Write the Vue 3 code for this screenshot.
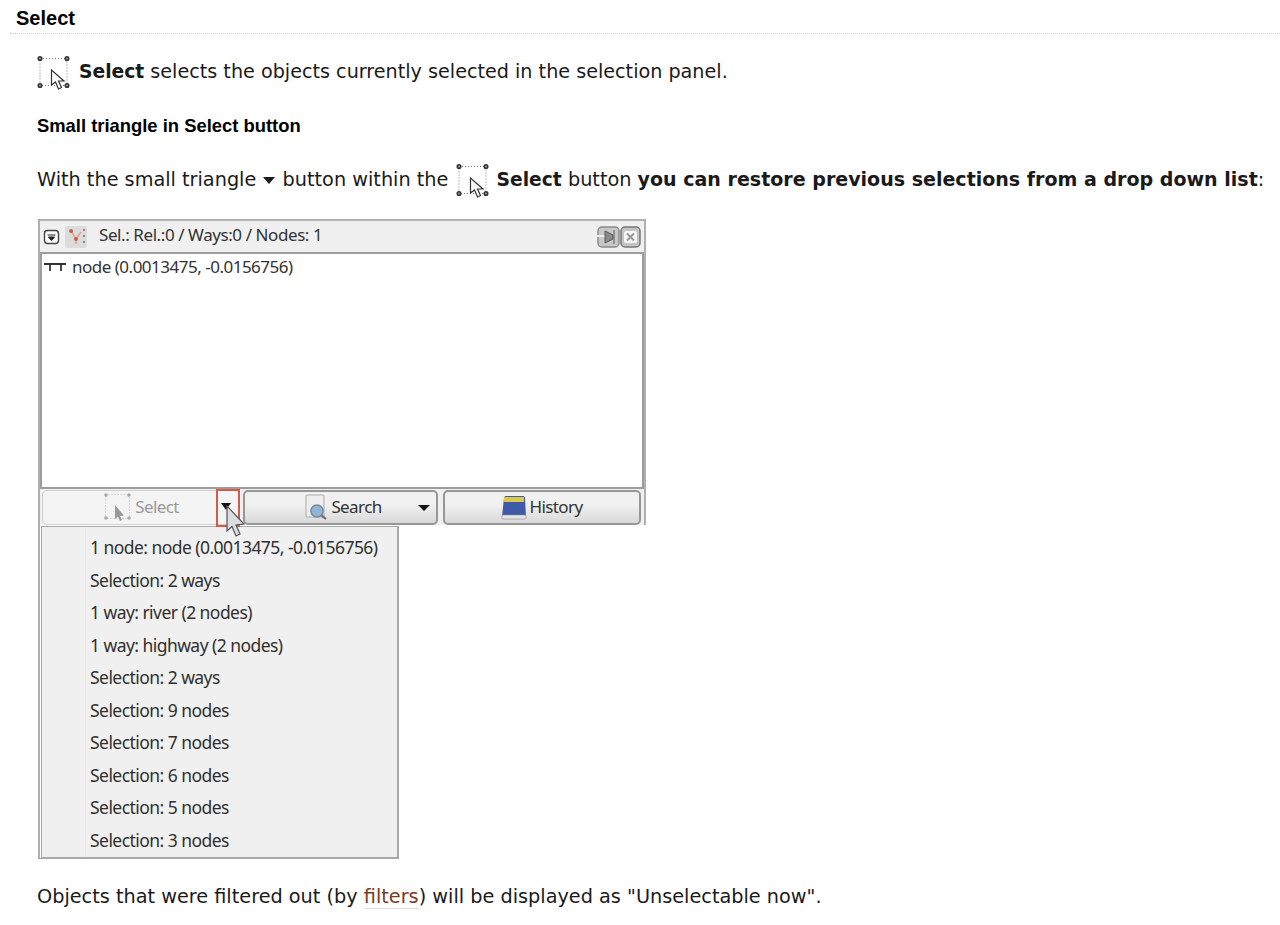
<script setup>
const items = [
  '1 node: node (0.0013475, -0.0156756)',
  'Selection: 2 ways',
  '1 way: river (2 nodes)',
  '1 way: highway (2 nodes)',
  'Selection: 2 ways',
  'Selection: 9 nodes',
  'Selection: 7 nodes',
  'Selection: 6 nodes',
  'Selection: 5 nodes',
  'Selection: 3 nodes'
]
</script>

<template>
  <main class="page">
    <h2 class="title">Select</h2>
    <section class="body">
      <p class="intro">
        <svg class="sel-icon" width="34" height="36" viewBox="0 0 34 36">
          <rect x="3" y="3.5" width="27" height="27" fill="none" stroke="#777" stroke-dasharray="1 2" />
          <g fill="#999" stroke="#333" stroke-width="1.5">
            <circle cx="3" cy="3.5" r="1.8" /><circle cx="30" cy="3.5" r="1.8" /><circle cx="3" cy="30.5" r="1.8" /><circle cx="30" cy="30.5" r="1.8" />
          </g>
          <path d="M14.5 15 L14.5 30 L18.5 27 L21.5 34 L24.5 32.5 L21.5 26 L27 26 Z" fill="#fff" stroke="#333" stroke-width="1.2" />
        </svg>
        <span><b class="lead">Select</b> selects the objects currently selected in the selection panel.</span>
      </p>
      <h3 class="sub">Small triangle in Select button</h3>
      <p class="line">
        With the small triangle <span class="tri"></span> button within the
        <svg class="sel-icon inl" width="34" height="36" viewBox="0 0 34 36">
          <rect x="3" y="3.5" width="27" height="27" fill="none" stroke="#777" stroke-dasharray="1 2" />
          <g fill="#999" stroke="#333" stroke-width="1.5">
            <circle cx="3" cy="3.5" r="1.8" /><circle cx="30" cy="3.5" r="1.8" /><circle cx="3" cy="30.5" r="1.8" /><circle cx="30" cy="30.5" r="1.8" />
          </g>
          <path d="M14.5 15 L14.5 30 L18.5 27 L21.5 34 L24.5 32.5 L21.5 26 L27 26 Z" fill="#fff" stroke="#333" stroke-width="1.2" />
        </svg>
        <b class="lead">Select</b> button <b>you can restore previous selections from a drop down list</b>:
      </p>

      <figure class="figure">
        <div class="panel">
          <div class="head">
            <svg width="18" height="18" viewBox="0 0 18 18">
              <rect x="1.5" y="2.5" width="14" height="13" rx="3" fill="#fff" stroke="#444" stroke-width="1.4" />
              <path d="M4.5 7h8M5.5 9h6l-3 3.5z" fill="#222" stroke="#222" />
            </svg>
            <svg width="24" height="24" viewBox="0 0 24 24">
              <rect x="1" y="1" width="22" height="22" rx="2" fill="#dcdcdc" />
              <path d="M7 6 L12 14 L17 7 M12 14 V19" fill="none" stroke="#e8a090" stroke-width="1.6" />
              <circle cx="7" cy="6" r="2" fill="#c9604a" /><circle cx="12" cy="14" r="2" fill="#c9604a" />
              <path d="M20 4v2M20 10v2M20 16v2" stroke="#888" stroke-width="2" />
            </svg>
            <span class="head-text">Sel.: Rel.:0 / Ways:0 / Nodes: 1</span>
            <span class="head-btns">
              <svg width="24" height="22" viewBox="0 0 24 22">
                <rect x="2" y="1" width="21" height="20" rx="4" fill="#c8c8c8" stroke="#8a8a8a" stroke-width="1.5" />
                <path d="M0 10h10" stroke="#eee" stroke-width="2" />
                <path d="M9 5 L17 9 V13 L9 17 Z M18 4v14" fill="#8a8a8a" stroke="#5c5c5c" />
              </svg>
              <svg width="21" height="22" viewBox="0 0 21 22">
                <rect x="1" y="1" width="19" height="20" rx="4" fill="#c4c4c4" stroke="#777" stroke-width="1.5" />
                <rect x="4" y="5" width="13" height="12" rx="2" fill="#f6f6f6" />
                <path d="M7 7.5 L14 14.5 M14 7.5 L7 14.5" stroke="#999" stroke-width="2" />
              </svg>
            </span>
          </div>
          <div class="list">
            <div class="list-row">
              <svg width="24" height="10" viewBox="0 0 24 10">
                <path d="M0 2h22M6 2v7M17 2v7" stroke="#333" stroke-width="1.8" fill="none" />
              </svg>
              <span>node (0.0013475, -0.0156756)</span>
            </div>
          </div>
          <div class="buttons">
            <div class="btn disabled sel">
              <span class="btn-main">
                <svg width="30" height="30" viewBox="0 0 30 30">
                  <rect x="2.5" y="2.5" width="24" height="24" fill="none" stroke="#bbb" stroke-dasharray="1 2" />
                  <g fill="#aaa"><circle cx="3" cy="3" r="1.8" /><circle cx="26" cy="3" r="1.8" /><circle cx="3" cy="26" r="1.8" /><circle cx="26" cy="26" r="1.8" /></g>
                  <path d="M12 13 L12 27 L15 24.5 L17 29 L19 28 L17 24 L21 23.5 Z" fill="#999" />
                </svg>
                Select
              </span>
            </div>
            <div class="btn raised search">
              <span class="btn-main">
                <svg width="26" height="26" viewBox="0 0 26 26">
                  <rect x="3" y="1" width="18" height="22" rx="1" fill="#eee" stroke="#aaa" />
                  <circle cx="14" cy="17" r="6" fill="#8fb6d8" stroke="#7d8a96" stroke-width="1.6" />
                  <path d="M18.5 21.5 L23 25" stroke="#6a6a6a" stroke-width="2.2" />
                </svg>
                Search
              </span>
              <span class="drop"></span>
            </div>
            <div class="btn raised hist">
              <span class="btn-main">
                <svg width="26" height="26" viewBox="0 0 26 26">
                  <path d="M1 23 L3 4 Q3 2 5 2 H22 Q24 2 24 4 L25 23 Z" fill="#3f5aa8" />
                  <rect x="3" y="3" width="20" height="5" fill="#d8c94c" />
                  <rect x="1" y="21" width="24" height="4" rx="1" fill="#e6e6e6" stroke="#8a8a8a" stroke-width="0.6" />
                </svg>
                History
              </span>
            </div>
          </div>
        </div>
        <div class="stub"></div>

        <ul class="menu">
          <li v-for="(item, i) in items" :key="i" class="menu-item">{{ item }}</li>
        </ul>

        <div class="marker"></div>
        <span class="mini-tri"></span>
        <svg class="cursor" width="22" height="34" viewBox="0 0 22 34">
          <path d="M2 1 L2 26 L7 21.5 L11 31 L15 29 L11 20 L19 19 Z" fill="#d9dde0" stroke="#555" stroke-width="1.2" />
        </svg>
      </figure>

      <p class="last">Objects that were filtered out (by <a class="link">filters</a>) will be displayed as "Unselectable now".</p>
    </section>
  </main>
</template>

<style>
html, body { background: #fff; margin: 0; }
</style>

<style scoped>
.page { width: 1280px; height: 925px; overflow: hidden; padding-top: 6px; box-sizing: border-box; font-family: "DejaVu Sans", sans-serif; color: #1a1a1a; }
.title { margin: 0 0 0 10px; padding: 0 0 3px 6px; height: 24px; font: bold 20px/24px "Liberation Sans", sans-serif; color: #000; border-bottom: 1px dotted #ccc; }
.body { padding-left: 37px; }
.intro { margin: 21px 0 0; height: 36px; display: flex; align-items: center; gap: 8px; font-size: 19.18px; white-space: nowrap; }
.intro span { position: relative; top: -2px; }
.sel-icon { flex: none; }
.sub { margin: 23px 0 0; font: bold 18.4px/24px "Liberation Sans", sans-serif; color: #000; }
.line { margin: 23px 0 0; height: 36px; font-size: 19.27px; line-height: 36px; white-space: nowrap; }
.line b { font-size: 19.05px; }
b.lead, .line b.lead { font-size: 18.7px; }
.inl { vertical-align: middle; margin: 0 7px 0 1px; }
.tri { display: inline-block; width: 0; height: 0; border: 6.5px solid transparent; border-top: 7px solid #1a1a1a; border-bottom: 0; vertical-align: 2px; margin: 0 1px; }
.figure { position: relative; margin: 22px 0 0 1px; width: 608px; height: 640px; }
.panel { width: 608px; height: 306px; box-sizing: border-box; background: #f0f0f0; border: 2px solid #b0b0b0; border-bottom: 0; display: flex; flex-direction: column; font-family: "Noto Sans", sans-serif; font-size: 17px; letter-spacing: -0.42px; color: #333; }
.head { height: 31px; flex: none; display: flex; align-items: center; gap: 3px; padding: 0 3px; box-sizing: border-box; }
.head-text { margin: -4px 0 0 8px; }
.head-btns { margin-left: auto; display: flex; align-items: center; gap: 0; }
.list { flex: none; height: 237px; box-sizing: border-box; background: #fff; border: 2px solid #9d9d9d; padding: 2px 0 0 2px; letter-spacing: -0.5px; }
.list-row { display: flex; align-items: center; gap: 4px; line-height: 22px; }
.buttons { flex: 1; display: flex; padding: 1px 3px 0 2px; gap: 3px; }
.btn { height: 35px; box-sizing: border-box; border-radius: 5px; display: flex; align-items: center; position: relative; flex: none; letter-spacing: -0.6px; }
.btn-main { display: inline-flex; align-items: center; gap: 2px; margin-top: -2px; }
.sel { width: 198px; background: #f4f4f4; border: 1px solid #cfcfcf; color: #9a9a9a; justify-content: center; }
.raised { background: linear-gradient(#f1f1f1, #f1f1f1 40%, #d9d9d9); border: 2px solid #979797; color: #333; justify-content: center; }
.search { width: 195px; padding-left: 4px; margin-right: 2px; }
.hist { width: 198px; }
.drop { position: absolute; right: 6px; top: 13px; width: 0; height: 0; border: 6px solid transparent; border-top: 6px solid #111; border-bottom: 0; }
.stub { width: 3px; height: 334px; box-sizing: border-box; border-left: 2px solid #b0b0b0; border-bottom: 1px solid #999; }
.marker { position: absolute; left: 178px; top: 270px; width: 24px; height: 38px; box-sizing: border-box; border: 2px solid #d65a48; }
.mini-tri { position: absolute; left: 183px; top: 284px; width: 0; height: 0; border: 5.5px solid transparent; border-top: 7px solid #111; border-bottom: 0; }
.cursor { position: absolute; left: 187px; top: 286px; }
.menu { position: absolute; left: 3px; top: 307px; width: 358px; height: 333px; box-sizing: border-box; margin: 0; padding: 4px 0 0 48px; list-style: none; background: linear-gradient(90deg, #f0f0f0 43px, #e6e6e6 43px, #e6e6e6 44px, #f0f0f0 44px); border: 1px solid #a8a8a8; border-width: 1px 2px 2px 1px; font-family: "Noto Sans", sans-serif; font-size: 17.5px; letter-spacing: -0.55px; color: #2f2f2f; }
.menu-item { height: 32.5px; line-height: 32.5px; white-space: nowrap; }
.last { margin: 24px 0 0; font-size: 19.27px; line-height: 28px; white-space: nowrap; }
.link { color: #7a3b22; border-bottom: 1px solid #e6dcd6; }
</style>
